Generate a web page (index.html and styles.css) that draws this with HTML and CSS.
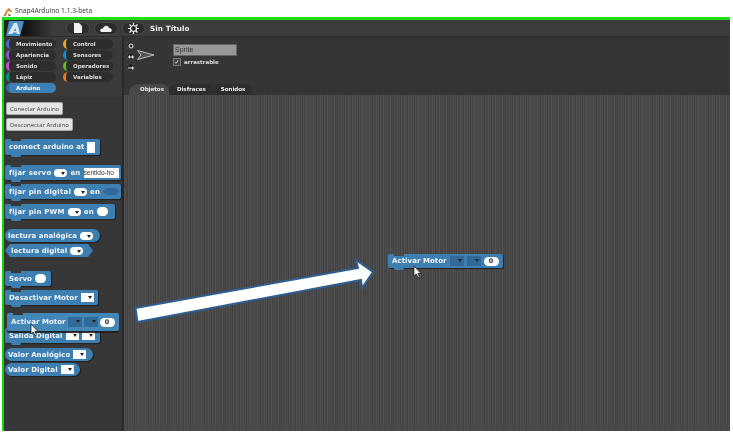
FILE: index.html
```html
<!DOCTYPE html>
<html lang="es">
<head>
<meta charset="utf-8">
<title>Snap4Arduino</title>
<link rel="stylesheet" href="styles.css">
</head>
<body>
<header class="titlebar">
  <svg class="appicon" width="10" height="8" viewBox="0 0 11 9"><path d="M0.500 9 L4 2 L6.500 0 L10.500 4 L8.500 4.500 L6.500 3 L4.500 5.500 L3 9Z" fill="#c9822e"/><path d="M4.500 2.500 L7.500 3.500 L4 5.500Z" fill="#e8c06a"/><path d="M6 6 L9 9 L6 9Z" fill="#7a5a2a"/></svg>
  <span>Snap4Arduino 1.1.3-beta</span>
</header>
<div class="ide">
  <div class="topbar">
    <div class="logobox"><svg class="logo" width="18" height="15" viewBox="0 0 18 15"><path d="M0 15 L3 0 L18 0 L14 15Z" fill="#4d8fc4"/><path d="M2 13 L8 2 L11 2 L14 13 L11 13 L9.500 7 L6 13Z" fill="#dbe9f5"/><path d="M6 10 H12 V11.500 H6Z" fill="#dbe9f5"/></svg></div>
    <div class="tb-btn tb-file"><svg width="8" height="10" viewBox="0 0 8 10"><path d="M0 0 H5 L8 3 V10 H0Z" fill="#f2f2f2"/></svg></div>
    <div class="tb-btn tb-cloud"><svg width="12" height="7" viewBox="0 0 12 7"><path d="M1 7 C-1 5 1 3 3 3.500 C4 0 8 0 9 3 C11 3 13 5 11 7Z" fill="#f2f2f2"/></svg></div>
    <div class="tb-btn tb-gear"><svg width="11" height="11" viewBox="0 0 11 11"><circle cx="5.500" cy="5.500" r="3" fill="none" stroke="#f2f2f2" stroke-width="1.200"/><path d="M5.500 0 V2 M5.500 9 V11 M0 5.500 H2 M9 5.500 H11 M1.500 1.500 L3 3 M8 8 L9.500 9.500 M1.500 9.500 L3 8 M8 3 L9.500 1.500" stroke="#f2f2f2" stroke-width="1.200"/></svg></div>
    <span class="project">Sin Título</span>
  </div>
  <div class="main">
    <aside class="left">
      <nav class="cats">
        <div class="cat c1">Movimiento</div><div class="cat c2">Control</div>
        <div class="cat c3">Apariencia</div><div class="cat c4">Sensores</div>
        <div class="cat c5">Sonido</div><div class="cat c6">Operadores</div>
        <div class="cat c7">Lápiz</div><div class="cat c8">Variables</div>
        <div class="cat c9 active">Arduino</div>
      </nav>
      <div class="palette">
        <button class="pbtn">Conectar Arduino</button>
        <button class="pbtn second">Desconectar Arduino</button>
        <div class="block cmd w95 h16 m8"><span>connect arduino at</span><i class="sq"></i></div>
        <div class="block cmd wide w116 h15 m10"><span>fijar servo</span><i class="dd"></i><span>en</span><i class="txt">sentido-ho</i></div>
        <div class="block cmd wide w116 h15 m4"><span>fijar pin digital</span><i class="dd"></i><span>en</span><i class="hex"></i></div>
        <div class="block cmd wide w110 h15 m5"><span>fijar pin PWM</span><i class="dd"></i><span>en</span><i class="oval"></i></div>
        <div class="block rep w95 h13 m10"><span>lectura analógica</span><i class="dd"></i></div>
        <div class="block pred w88 h13 m2"><span>lectura digital</span><i class="dd"></i></div>
        <div class="block cmd w46 h15 m14"><span>Servo</span><i class="oval"></i></div>
        <div class="block cmd w93 h15 m4"><span>Desactivar Motor</span><i class="ds"></i></div>
        <div class="block cmd w95 h15 m24"><span>Salida Digital</span><i class="ds"></i><i class="ds"></i></div>
        <div class="block rep w88 h13 m5"><span>Valor Analógico</span><i class="ds"></i></div>
        <div class="block rep w75 h13 m2"><span>Valor Digital</span><i class="ds"></i></div>
      </div>
    </aside>
    <section class="right">
      <div class="corral">
        <div class="rot">
          <span class="rbtn"><svg width="6" height="6" viewBox="0 0 6 6"><circle cx="3" cy="3" r="2" fill="none" stroke="#eee" stroke-width="1"/></svg></span>
          <span class="rbtn"><svg width="6" height="4" viewBox="0 0 6 4"><path d="M0 2 L2 0 V4Z M6 2 L4 0 V4Z M2 1.500 H4 V2.500 H2Z" fill="#eee"/></svg></span>
          <span class="rbtn"><svg width="6" height="4" viewBox="0 0 6 4"><path d="M6 2 L4 0 V4Z M0 1.500 H4 V2.500 H0Z" fill="#eee"/></svg></span>
        </div>
        <svg class="sprite" width="18" height="10" viewBox="0 0 18 10"><path d="M0.500 0.500 L17 5 L0.500 9.500 L4 5Z" fill="#555" stroke="#bbb" stroke-width="1"/></svg>
        <div class="spriteinfo">
          <div class="spname">Sprite</div>
          <label class="drag"><span class="check">✓</span>arrastrable</label>
        </div>
        <div class="tabs">
          <span class="tab on">Objetos</span><span class="tab dis">Disfraces</span><span class="tab">Sonidos</span>
        </div>
      </div>
      <div class="scripts"></div>
    </section>
  </div>
  <div class="block cmd floating ghost"><span>Activar Motor</span><i class="de"></i><i class="de"></i><i class="zero">0</i></div>
  <div class="block cmd floating placed"><span>Activar Motor</span><i class="de"></i><i class="de"></i><i class="zero">0</i></div>
  <svg class="arrow" width="243" height="68" viewBox="0 0 243 68"><path d="M1.500 50 L224 10 L222 2 L239 14 L228 30 L227 22 L3.500 64Z" fill="#fff" stroke="#2f5f92" stroke-width="2"/></svg>
  <svg class="cursor c-a" width="9" height="13" viewBox="0 0 9 13"><path d="M1 1 V11 L3.200 9 L5 12.500 L6.500 11.800 L4.800 8.500 L8 8.500Z" fill="#fff" stroke="#222" stroke-width="0.800"/></svg>
  <svg class="cursor c-b" width="9" height="13" viewBox="0 0 9 13"><path d="M1 1 V11 L3.200 9 L5 12.500 L6.500 11.800 L4.800 8.500 L8 8.500Z" fill="#fff" stroke="#222" stroke-width="0.800"/></svg>
</div>
</body>
</html>
```
FILE: styles.css
```css
* { box-sizing: border-box; }
html, body { margin: 0; padding: 0; background: #fff; width: 733px; height: 435px; overflow: hidden; }
body { font-family: "DejaVu Sans", sans-serif; }

.titlebar { height: 17px; display: flex; align-items: center; gap: 2px; padding: 6px 0 0 3px; font: 6.700px/1 "Open Sans", "Liberation Sans", sans-serif; color: #333; filter: blur(.25px); }
.appicon { flex: none; }

.ide { position: relative; width: 728px; height: 414px; margin-left: 2px; border-top: 3px solid #1be01b; border-left: 2px solid #12d812; display: flex; flex-direction: column; background: #3a3a3a; overflow: hidden; filter: blur(.35px); }

.topbar { height: 17px; flex: none; display: flex; align-items: center; background: #3c3c3c; border-bottom: 1px solid #2c2c2c; font-weight: 700; color: #f0f0f0; }
.logobox { width: 60px; height: 16px; padding: 1px 0 0 2px; flex: none; background: linear-gradient(90deg, #222 0, #111 20px, #3c3c3c 50px); margin-right: 2px; }
.logo { display: block; }
.tb-btn { width: 24px; height: 13px; border-radius: 7px; background: #2c2c2c; border: 1px solid #4a4a4a; display: flex; align-items: center; justify-content: center; margin-right: 4px; }
.tb-gear { width: 23px; margin-right: 5px; }
.project { font-size: 7.200px; letter-spacing: .1px; }

.main { flex: 1; display: flex; min-height: 0; }
.left { width: 120px; flex: none; display: flex; flex-direction: column; background: #383838; border-right: 2px solid #2a2a2a; }
.cats { height: 60px; flex: none; background: #3a3a3a; padding: 2px 0 0 2px; display: grid; grid-template-columns: 50px 50px; column-gap: 7px; grid-auto-rows: 11px; font-size: 5.500px; font-weight: 700; color: #ddd; }
.cat { height: 10px; border-radius: 5px; background: #2d2d2d; border-left: 3px solid #888; padding-left: 7px; line-height: 10px; white-space: nowrap; }
.c1 { border-color: #4a6cd4; }
.c2 { border-color: #e6a822; }
.c3 { border-color: #8a55d7; }
.c4 { border-color: #0494dc; }
.c5 { border-color: #cf4ad9; }
.c6 { border-color: #62c213; }
.c7 { border-color: #009982; }
.c8 { border-color: #f3761d; }
.c9 { border-color: #2f6f9f; }
.active { background: #3f80b4; color: #fff; }

.palette { flex: 1; display: flex; flex-direction: column; align-items: flex-start; padding: 4px 0 0 1px; background: #373737; border-top: 1px solid #333; }
.pbtn { height: 13px; margin-left: 1px; padding: 0 3px; font: 6px/1 "Open Sans", "Liberation Sans", sans-serif; color: #444; background: #e4e4e4; border: 1px solid #aaa; border-radius: 2px; }
.second { margin-top: 3px; }

.block { display: flex; align-items: center; gap: 3px; position: relative; flex: none; padding-left: 4px; background: #3e7fb1; color: #f3f6fa; font-size: 7px; font-weight: 700; white-space: nowrap; box-shadow: 1px 1px 1px #222; }
.block > span { letter-spacing: .05px; }
.wide > span { letter-spacing: .2px; }
.cmd { border-radius: 2px; }
.cmd::before { content: ""; position: absolute; left: 6px; top: 0; width: 10px; height: 1.500px; background: #373737; }
.cmd::after { content: ""; position: absolute; left: 6px; bottom: -2px; width: 10px; height: 2px; background: #3e7fb1; border-radius: 0 0 2px 2px; }
.rep { border-radius: 7px; padding-left: 3px; }
.pred { padding-left: 6px; box-shadow: none; clip-path: polygon(5px 0, calc(100% - 5px) 0, 100% 50%, calc(100% - 5px) 100%, 5px 100%, 0 50%); }
.block i { font-style: normal; display: inline-block; flex: none; }
.w95 { width: 95px; } .w116 { width: 116px; } .w110 { width: 110px; } .w88 { width: 88px; } .w46 { width: 46px; } .w93 { width: 93px; } .w75 { width: 75px; }
.h16 { height: 16px; } .h15 { height: 15px; } .h13 { height: 13px; }
.m2 { margin-top: 2px; } .m4 { margin-top: 4px; } .m5 { margin-top: 5px; } .m8 { margin-top: 8px; } .m10 { margin-top: 10px; } .m14 { margin-top: 14px; } .m24 { margin-top: 23px; }

.sq { width: 8px; height: 11px; background: #fff; }
.dd { width: 13px; height: 8px; border-radius: 4px; background: #fff; position: relative; }
.dd::after, .ds::after, .de::after { content: ""; position: absolute; right: 2px; top: 3px; border: 2px solid transparent; border-top: 3px solid #222; border-bottom: 0; }
.ds { width: 13px; height: 9px; background: #fff; position: relative; }
.de { width: 14px; height: 10px; background: #33699a; position: relative; }
.txt { width: 35px; height: 10px; background: #fff; color: #333; font: 400 6.500px/10px "Liberation Sans", sans-serif; overflow: hidden; }
.hex { width: 16px; height: 7px; background: #2f6a9a; clip-path: polygon(3px 0, calc(100% - 3px) 0, 100% 50%, calc(100% - 3px) 100%, 3px 100%, 0 50%); }
.oval { width: 11px; height: 9px; border-radius: 5px; background: #fff; }
.zero { width: 15px; height: 9px; border-radius: 5px; background: #fff; color: #333; font-size: 6.500px; line-height: 9px; text-align: center; }

.right { flex: 1; display: flex; flex-direction: column; min-width: 0; }
.corral { height: 58px; flex: none; position: relative; display: flex; background: #353535; padding: 4px 0 0 2px; }
.rot { display: flex; flex-direction: column; gap: 2px; }
.rbtn { width: 9px; height: 9px; border-radius: 50%; background: #252525; border: 1px solid #4a4a4a; display: flex; align-items: center; justify-content: center; }
.sprite { margin: 9px 0 0 2px; flex: none; }
.spriteinfo { margin: 3px 0 0 18px; }
.spname { width: 64px; height: 12px; background: #989898; border: 1px solid #666; color: #333; font: 7px/10px "Liberation Sans", sans-serif; padding-left: 1px; }
.drag { display: flex; align-items: center; gap: 3px; margin-top: 2px; font-size: 5.500px; font-weight: 700; color: #ddd; }
.check { width: 8px; height: 8px; background: #444; border: 1px solid #777; color: #fff; font-size: 6px; line-height: 6px; text-align: center; }
.tabs { position: absolute; left: 5px; bottom: 0; display: flex; font-size: 5.500px; font-weight: 700; color: #eee; }
.tab { height: 11px; padding: 0 7px 0 8px; line-height: 11px; background: #2d2d2d; border-radius: 7px 7px 0 0; }
.tab.on { background: #484848; padding: 0 5px 0 11px; border-radius: 9px 7px 0 0; }
.scripts { flex: 1; background-color: #4a4a4a; background-image: repeating-linear-gradient(90deg, #515151 0 1px, #454545 1px 2px, #4c4c4c 2px 3px, #424242 3px 4px, #4e4e4e 4px 5px, #474747 5px 7px); }

.floating { position: absolute; }
.floating::before { background: #4a4a4a; }
.ghost { left: 3px; top: 293px; width: 112px; height: 18px; gap: 2px; background: #4386b8; z-index: 2; box-shadow: 0 2px 1px #222; }
.ghost::before { background: #373737; }
.ghost::after { display: none; }
.placed { left: 384px; top: 234px; width: 115px; height: 14px; }
.arrow { position: absolute; left: 130px; top: 238px; }
.cursor { position: absolute; z-index: 3; }
.c-a { left: 26px; top: 303px; }
.c-b { left: 409px; top: 245px; }
```
